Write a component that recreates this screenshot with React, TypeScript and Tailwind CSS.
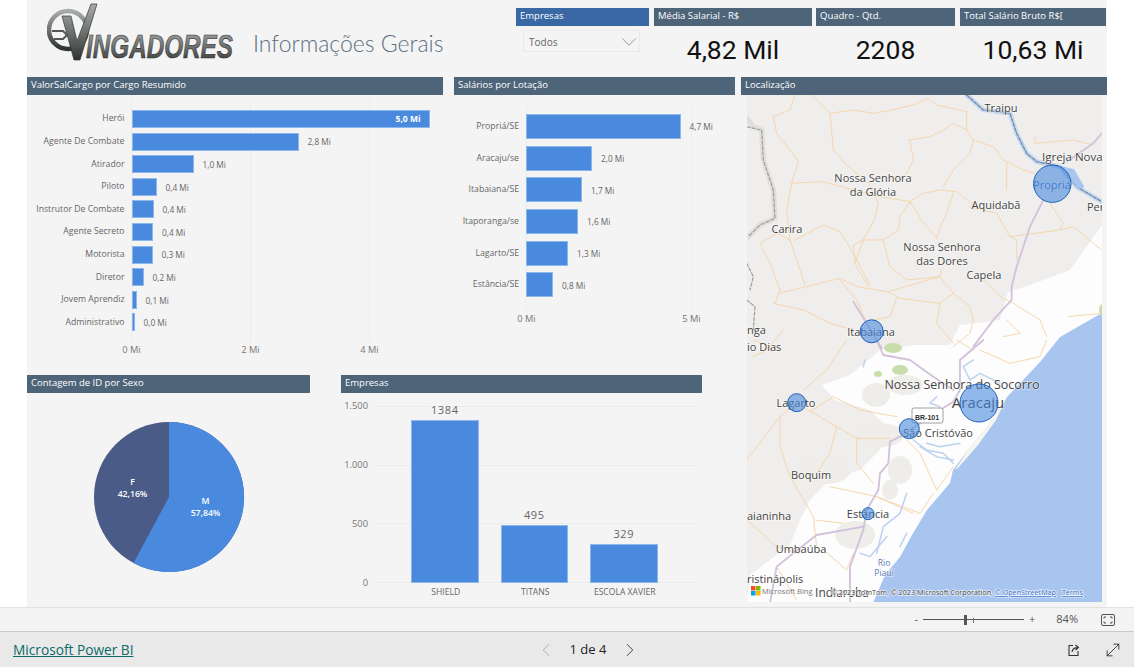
import { ChevronLeft, ChevronRight, ChevronDown, MoveDiagonal } from "lucide-react";

const FONT = "font-['Open_Sans',sans-serif]";

const cargos = [
  { name: "Herói", w: 298, value: "5,0 Mi" },
  { name: "Agente De Combate", w: 167, value: "2,8 Mi" },
  { name: "Atirador", w: 62, value: "1,0 Mi" },
  { name: "Piloto", w: 25, value: "0,4 Mi" },
  { name: "Instrutor De Combate", w: 22, value: "0,4 Mi" },
  { name: "Agente Secreto", w: 21.5, value: "0,4 Mi" },
  { name: "Motorista", w: 21, value: "0,3 Mi" },
  { name: "Diretor", w: 12, value: "0,2 Mi" },
  { name: "Jovem Aprendiz", w: 5, value: "0,1 Mi" },
  { name: "Administrativo", w: 3, value: "0,0 Mi" },
];

const lotacoes = [
  { name: "Propriá/SE", w: 154.5, value: "4,7 Mi" },
  { name: "Aracaju/se", w: 66, value: "2,0 Mi" },
  { name: "Itabaiana/SE", w: 56, value: "1,7 Mi" },
  { name: "Itaporanga/se", w: 52, value: "1,6 Mi" },
  { name: "Lagarto/SE", w: 42, value: "1,3 Mi" },
  { name: "Estância/SE", w: 27, value: "0,8 Mi" },
];

const empresas = [
  { name: "SHIELD", h: 163, value: "1384" },
  { name: "TITANS", h: 58, value: "495" },
  { name: "ESCOLA XAVIER", h: 39, value: "329" },
];

// coords below are read off the 3x crops, so the groups scale them back
const roadsTop = [
  "215,15 270,70 280,180 320,225 385,280 415,340 405,385 370,450 345,520 385,590",
  "270,70 340,60 400,70 455,60 520,45 565,25 590,45 680,65",
  "100,80 150,60 165,15",
  "100,80 110,130 150,180 175,215 155,280 140,360 150,450",
  "155,280 245,275 285,285 420,320 510,335 550,310 600,300 650,305 700,345",
  "510,335 480,380 475,420 430,450 370,450 340,465 345,520",
  "510,335 545,390 590,445 605,400 620,370 640,310",
  "680,65 680,120 700,150 690,190 640,240 610,290",
  "700,150 760,170 790,210 850,240 885,250",
  "510,150 520,210 500,250 475,270",
  "505,150 570,140 610,120 640,100 680,120",
  "165,450 250,405 300,425 340,490 390,585",
  "60,460 110,430 150,450 195,585",
  "60,460 90,520 120,600 105,640",
  "115,610 200,590 300,565 350,590 440,605 480,625 600,640 640,610",
  "300,570 350,630 375,690",
  "445,605 600,560 640,610 690,650 700,690",
  "430,450 450,530 500,570 600,560 605,540",
  "690,350 770,370 810,440 830,450 830,510",
  "800,215 800,300",
  "810,440 960,420 970,400 930,340",
  "960,420 1000,410 1085,480",
  "885,140 885,160 1000,150 1060,165",
  "730,570 780,620 820,640 900,690 920,740",
  "985,680 1085,670",
  "100,640 190,660 270,700 340,720",
  "470,625 450,680 400,690",
  "600,640 590,700 640,760",
  "800,690 840,730 790,740",
  "130,720 80,780 40,800",
  "700,690 690,730 640,770",
];

const roadsBottom = [
  "120,230 120,320 150,410 220,530 230,620",
  "170,190 120,230 20,360",
  "210,215 280,170 360,210 470,230",
  "170,190 290,260 350,295 450,295",
  "290,260 270,340 230,400",
  "350,295 350,370 400,430",
  "270,440 410,470 520,520",
  "500,300 540,340 590,450",
  "590,450 640,380",
  "410,470 540,520 580,460",
  "320,0 260,90 190,150",
  "120,30 40,0",
  "700,30 650,0",
  "720,30 810,70 900,50 920,0",
  "20,540 110,620 180,640",
  "225,540 310,550",
  "240,620 320,690 340,640",
  "110,680 170,780",
];

const water = [
  "700,60 670,80 690,120 720,100 780,130",
  "590,170 570,190 600,200",
  "520,300 560,330 610,340 640,370",
  "560,310 600,320 660,310",
  "640,360 590,350 540,320",
  "500,460 480,520 430,560 410,640",
  "440,590 390,650 360,640",
  "500,580 480,620",
  "375,60 370,80",
];

function Header({ title, className }: { title: string; className: string }) {
  return (
    <div className={`h-[18px] bg-[#4d6479] text-white text-[9.5px] font-medium leading-[16px] pl-1 whitespace-nowrap overflow-hidden ${className}`}>
      {title}
    </div>
  );
}

function Kpi({ title, value, className }: { title: string; value: string; className: string }) {
  return (
    <div className={className}>
      <Header title={title} className="" />
      <div className="font-['Roboto',sans-serif] text-[26.5px] leading-[32px] text-[#111] text-center mt-[8px]">{value}</div>
    </div>
  );
}

function HBar({ name, w, value, h, labelW, inside }: { name: string; w: number; value: string; h: string; labelW: string; inside?: boolean }) {
  return (
    <div className="flex items-center">
      <div className={`${labelW} shrink-0 text-right pr-[7px] text-[8.7px] text-[#666] whitespace-nowrap`}>{name}</div>
      <div
        className={`${h} bg-[#4a8ade] border border-[#8cb6ec] flex items-center justify-end`}
        style={{ width: w }}
      >
        {inside && <span className="text-[8.5px] font-bold text-white pr-[8px]">{value}</span>}
      </div>
      {!inside && <span className="ml-[9px] mt-[2px] text-[8.3px] text-[#666] whitespace-nowrap">{value}</span>}
    </div>
  );
}

function CargoChart() {
  return (
    <div className="w-[416px]">
      <Header title="ValorSalCargo por Cargo Resumido" className="" />
      <div className="relative h-[280px] pt-[15px]">
        <div className="absolute left-[104px] top-[5px] h-[243px] flex">
          <div className="w-[119px] border-l border-[#ececec]" />
          <div className="w-[119px] border-l border-[#ececec]" />
          <div className="w-[1px] border-l border-[#ececec]" />
        </div>
        <div className="relative flex flex-col gap-[4.6px]">
          {cargos.map((c, i) => (
            <HBar key={c.name} {...c} h="h-[18px]" labelW="w-[104.5px]" inside={i === 0} />
          ))}
        </div>
        <div className="flex ml-[45px] mt-[12px] text-[9.3px] text-[#777]">
          <div className="w-[119px] text-center">0 Mi</div>
          <div className="w-[119px] text-center">2 Mi</div>
          <div className="w-[119px] text-center">4 Mi</div>
        </div>
      </div>
    </div>
  );
}

function LotacaoChart() {
  return (
    <div className="w-[281px] ml-[11px]">
      <Header title="Salários por Lotação" className="" />
      <div className="relative h-[280px] pt-[19px]">
        <div className="absolute left-[72px] top-[7px] h-[206px] flex">
          <div className="w-[165px] border-l border-[#ececec]" />
          <div className="w-[1px] border-l border-[#ececec]" />
        </div>
        <div className="relative flex flex-col gap-[6.7px]">
          {lotacoes.map((l) => (
            <HBar key={l.name} {...l} h="h-[25px]" labelW="w-[72px]" />
          ))}
        </div>
        <div className="flex ml-[-10px] mt-[15px] text-[9.3px] text-[#777]">
          <div className="w-[165px] shrink-0 text-center">0 Mi</div>
          <div className="w-[165px] shrink-0 text-center">5 Mi</div>
        </div>
      </div>
    </div>
  );
}

function PieChart() {
  return (
    <div className="w-[283px]">
      <Header title="Contagem de ID por Sexo" className="" />
      <div className="pl-[66px] pt-[28px]">
        <svg width="152" height="152" viewBox="92.5 421 152 152" className="block">
          <circle cx="168.5" cy="497" r="75" fill="#4a5b87" />
          <path d="M168.5 497 L168.5 422 A75 75 0 1 1 133 563 Z" fill="#4a8ade" />
          <g fill="#fff" fontSize="8.7" fontWeight="600" textAnchor="middle">
            <text x="132" y="485">F</text>
            <text x="132" y="497">42,16%</text>
            <text x="205" y="504">M</text>
            <text x="205" y="516">57,84%</text>
          </g>
        </svg>
      </div>
    </div>
  );
}

function EmpresasChart() {
  return (
    <div className="w-[361px] ml-[31px]">
      <Header title="Empresas" className="" />
      <div className="relative h-[214px]">
        <div className="absolute left-[34px] top-[13px] w-[322px] h-[177px] flex flex-col justify-between">
          <div className="h-px bg-[#ececec]" />
          <div className="h-px bg-[#ececec]" />
          <div className="h-px bg-[#ececec]" />
          <div className="h-px bg-[#ececec]" />
        </div>
        <div className="absolute left-0 top-[6px] w-[27px] h-[191px] flex flex-col justify-between text-right text-[9.3px] leading-[14px] text-[#777]">
          <div>1.500</div>
          <div>1.000</div>
          <div>500</div>
          <div>0</div>
        </div>
        <div className="relative flex items-end gap-[22px] pl-[70px] h-[190px]">
          {empresas.map((e) => (
            <div key={e.name} className="w-[67.5px] flex flex-col items-center">
              <span className="text-[11px] leading-[14px] tracking-[0.6px] text-[#666] mb-[3px]">{e.value}</span>
              <div className="w-full bg-[#4a8ade] border border-[#8cb6ec]" style={{ height: e.h }} />
            </div>
          ))}
        </div>
        <div className="relative flex gap-[22px] pl-[71px] mt-[3px]">
          {empresas.map((e) => (
            <div key={e.name} className="w-[67.5px] flex justify-center text-[8.6px] text-[#666] whitespace-nowrap">{e.name}</div>
          ))}
        </div>
      </div>
    </div>
  );
}

function MapLabel({ x, y, size = 11, anchor = "middle", fill = "#444", children }: { x: number; y: number; size?: number; anchor?: "middle" | "start"; fill?: string; children: string }) {
  return (
    <text x={x} y={y} fontSize={size} textAnchor={anchor} fill={fill} stroke="#ffffff" strokeOpacity="0.55" strokeWidth="1.5" paintOrder="stroke">
      {children}
    </text>
  );
}

function MapChart() {
  return (
    <svg width="355" height="507" viewBox="747 95 355 507" className="block">
      <rect x="747" y="95" width="355" height="507" fill="#efeeec" />
      {/* lowland */}
      <polygon fill="#fdfdfd" points="1102,225 1070,270 1030,285 1008,292 1000,320 960,325 950,345 915,345 880,350 850,375 822,385 835,400 870,410 890,430 880,450 860,470 830,480 810,500 800,520 790,545 770,560 750,575 747,603 880,603 1102,400" />
      <g fill="#eeede9">
        <ellipse cx="876" cy="395" rx="14" ry="12" />
        <ellipse cx="900" cy="470" rx="12" ry="14" />
        <ellipse cx="855" cy="535" rx="20" ry="14" />
        <ellipse cx="890" cy="490" rx="8" ry="10" />
        <ellipse cx="825" cy="470" rx="26" ry="14" />
        <ellipse cx="905" cy="385" rx="18" ry="10" />
        <ellipse cx="880" cy="435" rx="24" ry="12" />
      </g>
      <polygon fill="#a8c5f0" points="1102,313 1060,337 1040,362 1007,397 987,427 968,450 953,470 950,483 927,510 912,535 900,557 885,575 873,603 1102,603" />
      <polygon fill="#f7f5ee" points="1007,397 987,427 968,450 955,470 958,468 978,445 996,420" />
      <g fill="#c9dcab">
        <ellipse cx="893" cy="348" rx="9" ry="5" />
        <ellipse cx="900" cy="370" rx="8" ry="5" />
        <ellipse cx="878" cy="374" rx="4" ry="3" />
        <ellipse cx="1103" cy="310" rx="4" ry="6" />
      </g>

      <g transform="translate(740 90) scale(0.3333)" fill="none" strokeLinejoin="round" strokeLinecap="round">
        {/* river on top of the state line */}
        <polyline points="680,15 730,60 810,70 830,130 860,190 890,215 960,230 1010,290 1085,335" stroke="#c6d8ee" strokeWidth="14" />
        <polyline points="680,15 730,60 810,70 830,130 860,190 890,215 960,230 1010,290 1085,335" stroke="#6f8cab" strokeWidth="4" strokeDasharray="10 5" />
        <polyline points="20,85 40,110 65,120 70,210 100,300 105,385 60,405 25,440" stroke="#e0dfdc" strokeWidth="16" />
        <polyline points="20,110 65,120 70,210 100,300 105,385 60,405 25,440" stroke="#9b9b9b" strokeWidth="3.5" strokeDasharray="10 6" />
        <polyline points="20,520 40,560 30,600" stroke="#9b9b9b" strokeWidth="3.5" strokeDasharray="10 6" />
        <polyline points="20,630 45,650 40,720" stroke="#9b9b9b" strokeWidth="3.5" strokeDasharray="10 6" />
        <polyline points="960,230 1000,240 1030,290 1010,290" fill="#a8c5f0" stroke="#a8c5f0" strokeWidth="6" />
        {roadsTop.map((p) => (
          <polyline key={p} points={p} stroke="#f6d2a4" strokeWidth="2.7" />
        ))}
        <polyline points="1085,130 1060,160 980,215" stroke="#d2c1da" strokeWidth="5.5" />
        <polyline points="910,330 870,410 850,470 830,530 815,590 815,630 760,690 700,770" stroke="#d2c1da" strokeWidth="5.5" />
        <polyline points="340,635 380,700 425,775" stroke="#d2c1da" strokeWidth="5.5" />
      </g>

      <g transform="translate(740 340) scale(0.3333)" fill="none" strokeLinejoin="round" strokeLinecap="round">
        {roadsBottom.map((p) => (
          <polyline key={p} points={p} stroke="#f6d2a4" strokeWidth="2.7" />
        ))}
        {water.map((p) => (
          <polyline key={p} points={p} stroke="#bcd2f1" strokeWidth="4.5" />
        ))}
        <polyline points="730,0 660,60 660,150 640,185 600,210 480,290 450,305 445,370 420,400 415,450 380,510 370,570 330,680 330,790" stroke="#d2c1da" strokeWidth="5.5" />
        <polyline points="410,0 430,45 510,60 580,110 640,150" stroke="#d2c1da" strokeWidth="5.5" />
        <polyline points="370,560 230,585 160,640 110,680 90,790" stroke="#d2c1da" strokeWidth="5.5" />
      </g>

      <g fontFamily="'Open Sans', sans-serif">
        <MapLabel x={1001} y={112}>Traipu</MapLabel>
        <MapLabel x={1042} y={161} size={11.5} anchor="start">Igreja Nova</MapLabel>
        <MapLabel x={873} y={182}>Nossa Senhora</MapLabel>
        <MapLabel x={873} y={196}>da Glória</MapLabel>
        <MapLabel x={996} y={209}>Aquidabã</MapLabel>
        <MapLabel x={1087} y={211} anchor="start">Per</MapLabel>
        <MapLabel x={787} y={233}>Carira</MapLabel>
        <MapLabel x={942} y={251}>Nossa Senhora</MapLabel>
        <MapLabel x={942} y={265}>das Dores</MapLabel>
        <MapLabel x={984} y={279}>Capela</MapLabel>
        <MapLabel x={871} y={336}>Itabaiana</MapLabel>
        <MapLabel x={747} y={334} anchor="start">nga</MapLabel>
        <MapLabel x={747} y={351} anchor="start">io Dias</MapLabel>
        <MapLabel x={962} y={389} size={12.5}>Nossa Senhora do Socorro</MapLabel>
        <MapLabel x={978} y={408} size={15}>Aracaju</MapLabel>
        <MapLabel x={796} y={407}>Lagarto</MapLabel>
        <MapLabel x={938} y={437}>São Cristóvão</MapLabel>
        <MapLabel x={811} y={479}>Boquim</MapLabel>
        <MapLabel x={868} y={518}>Estância</MapLabel>
        <MapLabel x={747} y={520} anchor="start">aianinha</MapLabel>
        <MapLabel x={801} y={553}>Umbaúba</MapLabel>
        <MapLabel x={884} y={566} size={8.5} fill="#5b7fb5">Rio</MapLabel>
        <MapLabel x={884} y={576} size={8.5} fill="#5b7fb5">Piauí</MapLabel>
        <MapLabel x={747} y={583} anchor="start">ristinápolis</MapLabel>
        <MapLabel x={842} y={597} size={12}>Indiaroba</MapLabel>
        <MapLabel x={1052} y={189} fill="#3d6da8">Propriá</MapLabel>
      </g>

      <rect x="912" y="408" width="31" height="15" rx="2" fill="#fff" stroke="#888" strokeWidth="0.8" />
      <text x="927" y="420" fontSize="7" fontWeight="700" textAnchor="middle" fill="#333" fontFamily="'Liberation Sans', sans-serif">BR-101</text>

      <g fill="#4a8ade" fillOpacity="0.6" stroke="#1f62b8" strokeWidth="1">
        <circle cx="1052.3" cy="183.7" r="18.7" />
        <circle cx="871.7" cy="331.3" r="11.5" />
        <circle cx="796.7" cy="402.7" r="9" />
        <circle cx="979" cy="403" r="19" />
        <circle cx="909.3" cy="428.7" r="10" />
        <circle cx="868" cy="513.7" r="6" />
      </g>

      <g>
        <rect x="751" y="586" width="4.5" height="4.5" fill="#f25022" />
        <rect x="756" y="586" width="4.5" height="4.5" fill="#7fba00" />
        <rect x="751" y="591" width="4.5" height="4.5" fill="#00a4ef" />
        <rect x="756" y="591" width="4.5" height="4.5" fill="#ffb900" />
        <text x="762" y="594" fontSize="7.5" fill="#777" fontFamily="'Open Sans', sans-serif">Microsoft Bing</text>
      </g>
      <text x="831" y="595" fontSize="7.2" fill="#444" stroke="#fff" strokeOpacity="0.7" strokeWidth="1.5" paintOrder="stroke" fontFamily="'Open Sans', sans-serif">
        © 2023 TomTom, © 2023 Microsoft Corporation,{" "}
        <tspan fill="#3a6fc4" textDecoration="underline">© OpenStreetMap</tspan>
        {"  "}
        <tspan dx="4" fill="#3a6fc4" textDecoration="underline">Terms</tspan>
      </text>
    </svg>
  );
}

function Logo() {
  return (
    <svg width="192" height="62" viewBox="0 0 192 62" className="block">
      <defs>
        <linearGradient id="steel" x1="0" y1="0" x2="0" y2="1">
          <stop offset="0" stopColor="#a8aca9" />
          <stop offset="0.5" stopColor="#6d7170" />
          <stop offset="1" stopColor="#2f3332" />
        </linearGradient>
      </defs>
      <circle cx="21" cy="27" r="19" fill="none" stroke="url(#steel)" strokeWidth="4.5" />
      <path d="M15 13 L24 13 L30 38 L44 1 L50 1 L33 57 L27 57 Z" fill="url(#steel)" stroke="#333" strokeWidth="0.7" />
      <path d="M5 28 L16 28 L20 32 L16 36 L7 36" fill="none" stroke="#555" strokeWidth="2" />
      <text
        x="39"
        y="55"
        fontFamily="'Liberation Sans', sans-serif"
        fontSize="33"
        fontWeight="700"
        fontStyle="italic"
        fill="url(#steel)"
        stroke="#2b2b2b"
        strokeWidth="0.6"
        textLength="147"
        lengthAdjust="spacingAndGlyphs"
      >
        INGADORES
      </text>
    </svg>
  );
}

function FitIcon() {
  return (
    <svg width="14" height="12" viewBox="0 0 14 12" fill="none" stroke="#555" strokeWidth="1">
      <rect x="0.5" y="0.5" width="13" height="11" rx="1.5" />
      <path d="M3 4.5 V3 H5 M9 3 H11 V4.5 M11 7.5 V9 H9 M5 9 H3 V7.5" />
    </svg>
  );
}

function ShareIcon() {
  return (
    <svg width="14" height="14" viewBox="0 0 14 14" fill="none" stroke="#333" strokeWidth="1.1">
      <path d="M6 2.5 H2 V12.5 H11 V8" />
      <path d="M5 9 C5.5 6 7.5 4.6 10.5 4.6 M8.5 2 L11.5 4.6 L8.5 7" />
    </svg>
  );
}

export default function App() {
  return (
    <div className={`w-[1134px] h-[667px] bg-white flex flex-col overflow-hidden ${FONT}`}>
      <div className="ml-[27px] w-[1080px] h-[607px] shrink-0 bg-[#f4f4f4] flex flex-col">
        <div className="h-[77px] flex shrink-0">
          <div className="ml-[20px] mt-[3px] w-[192px]">
            <Logo />
          </div>
          <div className="ml-[14px] mt-[27px] w-[263px] font-['Lato',sans-serif] text-[23px] leading-[32px] font-light text-[#5b7083] whitespace-nowrap">
            Informações Gerais
          </div>
          <div className="w-[133px] mt-[8px]">
            <div className="h-[18px] bg-[#3a68a5] text-white text-[9.5px] font-medium leading-[16px] pl-1">Empresas</div>
            <div className="ml-[7px] mt-[4px] w-[117px] h-[22px] border border-[#eaeaea] flex items-center justify-between pl-[5px] pt-[2px] text-[10px] text-[#666]">
              Todos
              <ChevronDown size={26} strokeWidth={0.6} className="text-[#666] -my-1 mr-[-3px]" />
            </div>
          </div>
          <Kpi title="Média Salarial - R$" value="4,82 Mil" className="w-[158px] ml-[5px] mt-[8px]" />
          <Kpi title="Quadro - Qtd." value="2208" className="w-[139px] ml-[4px] mt-[8px]" />
          <Kpi title="Total Salário Bruto R$[" value="10,63 Mi" className="w-[146px] ml-[5px] mt-[8px]" />
        </div>
        <div className="flex flex-1">
          <div className="w-[714px] flex flex-col">
            <div className="flex h-[298px]">
              <CargoChart />
              <LotacaoChart />
            </div>
            <div className="flex">
              <PieChart />
              <EmpresasChart />
            </div>
          </div>
          <div className="w-[366px]">
            <Header title="Localização" className="" />
            <div className="ml-[6px]">
              <MapChart />
            </div>
          </div>
        </div>
      </div>

      <div className="h-[24px] shrink-0 bg-[#f3f3f3] border-t border-[#e2e2e2] flex items-center justify-end text-[#555] text-[11px]">
        <span className="mr-[5px]">-</span>
        <div className="relative w-[101px] h-[10px] flex items-center">
          <div className="w-full h-px bg-[#555]" />
          <div className="absolute left-[41px] top-0 w-[3px] h-[10px] bg-[#555]" />
          <div className="absolute left-[50px] top-[3px] w-px h-[5px] bg-[#777]" />
        </div>
        <span className="ml-[5px]">+</span>
        <span className="ml-[21px]">84%</span>
        <span className="ml-[23px] mr-[19px]"><FitIcon /></span>
      </div>

      <div className="flex-1 bg-[#e9e9e9] border-t border-[#c9c9c9] grid grid-cols-3 items-center px-[13px]">
        <a className="text-[13.7px] text-[#0b6a6a] underline mt-[1px] whitespace-nowrap">Microsoft Power BI</a>
        <div className="flex items-center justify-center gap-[13px] ml-[42px] text-[13px] font-medium text-[#222]">
          <ChevronLeft size={22} strokeWidth={0.8} className="text-[#999]" />
          <span>1 de 4</span>
          <ChevronRight size={22} strokeWidth={1} className="text-[#333]" />
        </div>
        <div className="flex items-center justify-end gap-[22px]">
          <ShareIcon />
          <MoveDiagonal size={20} strokeWidth={1} className="text-[#222] mr-[-2px]" />
        </div>
      </div>
    </div>
  );
}
